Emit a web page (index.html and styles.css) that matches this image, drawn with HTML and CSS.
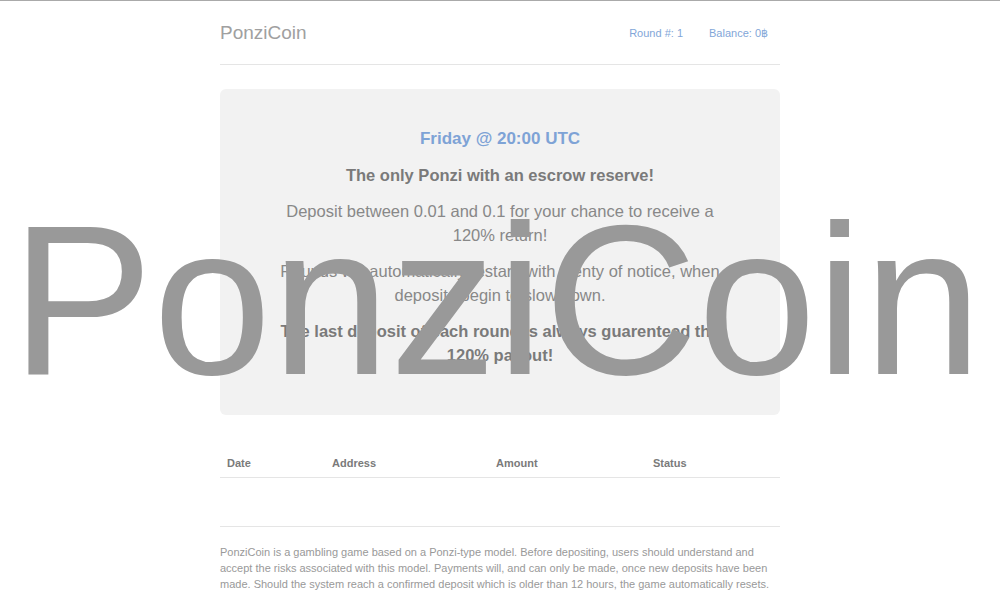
FILE: index.html
```html
<!DOCTYPE html>
<html lang="en">
<head>
    <meta charset="UTF-8">
    <title>PonziCoin</title>
    <link rel="stylesheet" href="styles.css">
</head>
<body>
    <div class="container">
        <div class="header">
            <h3 class="brand">PonziCoin</h3>
            <ul class="nav">
                <li><a href="#">Round #: <span id="round">1</span></a></li>
                <li><a href="#">Balance: <span id="balance">0</span>฿</a></li>
            </ul>
        </div>

        <div class="jumbotron">
            <h3 class="countdown">Friday @ 20:00 UTC</h3>
            <p class="lead"><strong>The only Ponzi with an escrow reserve!</strong></p>
            <p class="lead">Deposit between 0.01 and 0.1 for your chance to receive a 120% return!</p>
            <p class="lead">Rounds will automatically restart, with plenty of notice, when deposits begin to slow down.</p>
            <p class="lead"><strong>The last deposit of each round is always guarenteed the 120% payout!</strong></p>
        </div>

        <table class="deposits">
            <thead>
                <tr>
                    <th class="col-date">Date</th>
                    <th class="col-address">Address</th>
                    <th class="col-amount">Amount</th>
                    <th>Status</th>
                </tr>
            </thead>
            <tbody id="deposits"></tbody>
        </table>

        <div class="footer">
            <p>PonziCoin is a gambling game based on a Ponzi-type model. Before depositing, users should understand and accept the risks associated with this model. Payments will, and can only be made, once new deposits have been made. Should the system reach a confirmed deposit which is older than 12 hours, the game automatically resets.</p>
        </div>
    </div>

    <div class="watermark">PonziCoin</div>
</body>
</html>
```

FILE: styles.css
```css
html {
    border-top: 1px solid #aaa;
}

body {
    font-family: 'Liberation Sans', Arial, sans-serif;
    margin: 0;
    background: #fff;
    color: #888;
}

.container {
    width: 560px;
    margin: 0 auto;
}

.header {
    display: flex;
    justify-content: space-between;
    align-items: center;
    height: 63px;
    border-bottom: 1px solid #e5e5e5;
}

.brand {
    margin: 0;
    font-size: 19px;
    font-weight: normal;
    color: #a0a0a0;
    padding-top: 1px;
}

.nav {
    display: flex;
    gap: 26px;
    list-style: none;
    margin: 0;
    padding: 2px 12px 0 0;
    font-size: 11px;
}

.nav a {
    color: #82a6d8;
    text-decoration: none;
}

.jumbotron {
    margin-top: 24px;
    background: #f2f2f2;
    border-radius: 6px;
    padding: 40px 46px 42px;
    text-align: center;
    height: 326px;
    box-sizing: border-box;
}

.countdown {
    margin: 0 0 14px;
    font-size: 17px;
    color: #7ea3d6;
}

.lead {
    font-size: 16.5px;
    line-height: 24px;
    margin: 0 0 12px;
    color: #888;
}

.lead strong {
    color: #7a7a7a;
}

.deposits {
    width: 100%;
    margin-top: 36px;
    border-collapse: collapse;
    font-size: 11px;
}

.deposits th {
    text-align: left;
    color: #7a7a7a;
    padding: 6px 7px 8px;
    border-bottom: 1px solid #e5e5e5;
}

.col-date {
    width: 91px;
}

.col-address {
    width: 150px;
}

.col-amount {
    width: 143px;
}

.footer {
    margin-top: 48px;
    border-top: 1px solid #e5e5e5;
    padding-top: 17px;
}

.footer p {
    margin: 0;
    font-size: 11px;
    line-height: 16px;
    color: #999;
}

.watermark {
    position: absolute;
    left: 11px;
    top: 194px;
    font-size: 213px;
    line-height: 1;
    color: #999;
    white-space: nowrap;
}
```
